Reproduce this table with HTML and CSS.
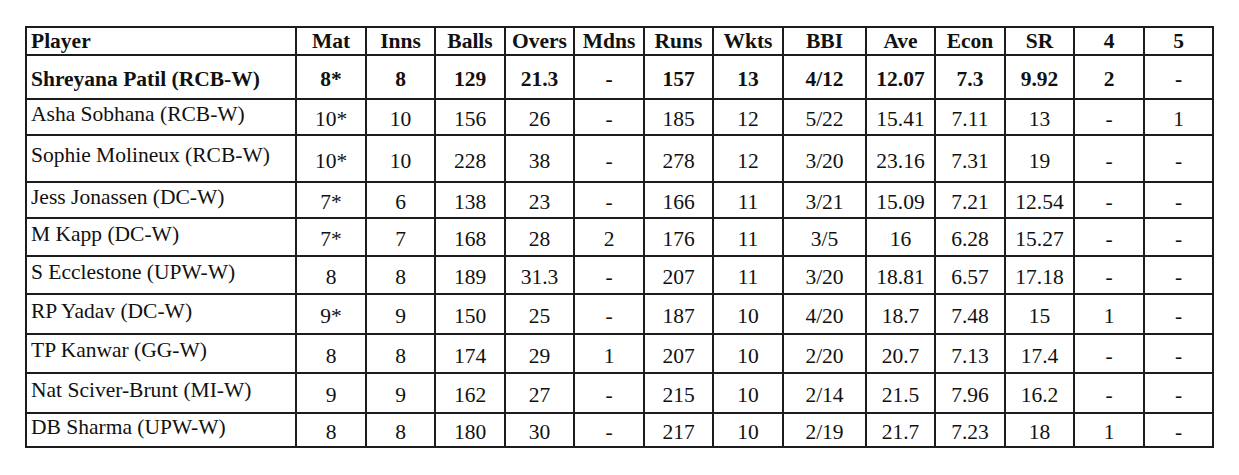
FILE: index.html
```html
<!DOCTYPE html>
<html>
<head>
<meta charset="utf-8">
<link rel="stylesheet" href="styles.css">
</head>
<body>
<div class="page">
<table class="stats">
<colgroup>
<col class="c-player"><col class="c-n"><col class="c-n2"><col class="c-n"><col class="c-n2"><col class="c-n"><col class="c-n2"><col class="c-n"><col class="c-bbi"><col class="c-n2"><col class="c-n"><col class="c-n2"><col class="c-n"><col class="c-n2">
</colgroup>
<thead>
<tr class="r-head">
<th class="name">Player</th><th>Mat</th><th>Inns</th><th>Balls</th><th>Overs</th><th>Mdns</th><th>Runs</th><th>Wkts</th><th>BBI</th><th>Ave</th><th>Econ</th><th>SR</th><th>4</th><th>5</th>
</tr>
</thead>
<tbody>
<tr class="r1 top">
<td class="name">Shreyana Patil (RCB-W)</td><td>8*</td><td>8</td><td>129</td><td>21.3</td><td>-</td><td>157</td><td>13</td><td>4/12</td><td>12.07</td><td>7.3</td><td>9.92</td><td>2</td><td>-</td>
</tr>
<tr class="r2">
<td class="name">Asha Sobhana (RCB-W)</td><td>10*</td><td>10</td><td>156</td><td>26</td><td>-</td><td>185</td><td>12</td><td>5/22</td><td>15.41</td><td>7.11</td><td>13</td><td>-</td><td>1</td>
</tr>
<tr class="r3">
<td class="name">Sophie Molineux (RCB-W)</td><td>10*</td><td>10</td><td>228</td><td>38</td><td>-</td><td>278</td><td>12</td><td>3/20</td><td>23.16</td><td>7.31</td><td>19</td><td>-</td><td>-</td>
</tr>
<tr class="r4">
<td class="name">Jess Jonassen (DC-W)</td><td>7*</td><td>6</td><td>138</td><td>23</td><td>-</td><td>166</td><td>11</td><td>3/21</td><td>15.09</td><td>7.21</td><td>12.54</td><td>-</td><td>-</td>
</tr>
<tr class="r5">
<td class="name">M Kapp (DC-W)</td><td>7*</td><td>7</td><td>168</td><td>28</td><td>2</td><td>176</td><td>11</td><td>3/5</td><td>16</td><td>6.28</td><td>15.27</td><td>-</td><td>-</td>
</tr>
<tr class="r6">
<td class="name">S Ecclestone (UPW-W)</td><td>8</td><td>8</td><td>189</td><td>31.3</td><td>-</td><td>207</td><td>11</td><td>3/20</td><td>18.81</td><td>6.57</td><td>17.18</td><td>-</td><td>-</td>
</tr>
<tr class="r7">
<td class="name">RP Yadav (DC-W)</td><td>9*</td><td>9</td><td>150</td><td>25</td><td>-</td><td>187</td><td>10</td><td>4/20</td><td>18.7</td><td>7.48</td><td>15</td><td>1</td><td>-</td>
</tr>
<tr class="r8">
<td class="name">TP Kanwar (GG-W)</td><td>8</td><td>8</td><td>174</td><td>29</td><td>1</td><td>207</td><td>10</td><td>2/20</td><td>20.7</td><td>7.13</td><td>17.4</td><td>-</td><td>-</td>
</tr>
<tr class="r9">
<td class="name">Nat Sciver-Brunt (MI-W)</td><td>9</td><td>9</td><td>162</td><td>27</td><td>-</td><td>215</td><td>10</td><td>2/14</td><td>21.5</td><td>7.96</td><td>16.2</td><td>-</td><td>-</td>
</tr>
<tr class="r10">
<td class="name">DB Sharma (UPW-W)</td><td>8</td><td>8</td><td>180</td><td>30</td><td>-</td><td>217</td><td>10</td><td>2/19</td><td>21.7</td><td>7.23</td><td>18</td><td>1</td><td>-</td>
</tr>
</tbody>
</table>
</div>
</body>
</html>
```

FILE: styles.css
```css
html, body {
  margin: 0;
  padding: 0;
  background: #ffffff;
}

.page {
  padding: 26px 0 0 25px;
}

.stats {
  border-collapse: collapse;
  table-layout: fixed;
  width: 1189px;
  font-family: "Liberation Serif", "Times New Roman", serif;
  font-size: 21.5px;
  color: #111111;
}

.c-player { width: 270px; }
.c-n { width: 70px; }
.c-n2 { width: 69px; }
.c-bbi { width: 83px; }

.stats th,
.stats td {
  border: 2px solid #1c1c1c;
  padding: 0 4px;
  text-align: center;
  vertical-align: middle;
  line-height: 24px;
  white-space: nowrap;
  overflow: hidden;
}

.stats td {
  padding-top: 4px;
}

.stats th {
  font-weight: bold;
}

.stats .name {
  text-align: left;
  padding-left: 4px;
}

.stats td.name {
  padding-top: 0;
  padding-bottom: 7px;
}

.stats tr.top td {
  font-weight: bold;
}

.stats tr.top td.name {
  padding-top: 4px;
  padding-bottom: 0;
}

.r-head { height: 28px; }
.r1 { height: 44px; }
.r2 { height: 36px; }
.r3 { height: 47px; }
.r4 { height: 36px; }
.r5 { height: 38px; }
.r6 { height: 38px; }
.r7 { height: 40px; }
.r8 { height: 39px; }
.r9 { height: 40px; }
.r10 { height: 34px; }
```
